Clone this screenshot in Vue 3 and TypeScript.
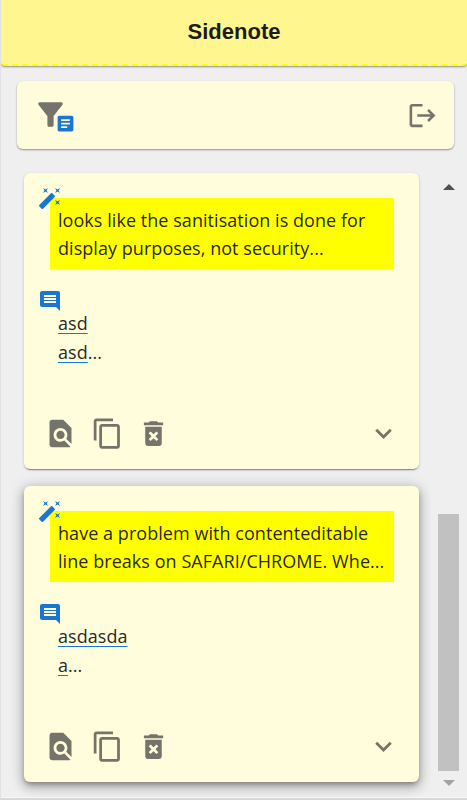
<script setup lang="ts">
interface Note {
  id: number;
  quote: string[];
  comment: string[];
  raised: boolean;
}

const notes: Note[] = [
  {
    id: 1,
    quote: ["looks like the sanitisation is done for", "display purposes, not security..."],
    comment: ["asd", "asd"],
    raised: false,
  },
  {
    id: 2,
    quote: ["have a problem with contenteditable", "line breaks on SAFARI/CHROME. Whe..."],
    comment: ["asdasda", "a"],
    raised: true,
  },
];
</script>

<template>
  <div class="page">
    <header class="header">Sidenote</header>

    <div class="toolbar">
      <div class="filter">
        <svg class="filter-icon" viewBox="0 0 24 24">
          <path d="M4.25 5.61C6.27 8.2 10 13 10 13v6c0 .55.45 1 1 1h2c.55 0 1-.45 1-1v-6s3.72-4.8 5.74-7.39c.51-.66.04-1.61-.79-1.61H5.04c-.83 0-1.3.95-.79 1.61z" />
        </svg>
        <svg class="filter-badge" viewBox="0 0 24 24">
          <path d="M19 3H5c-1.1 0-2 .9-2 2v14c0 1.1.9 2 2 2h14c1.1 0 2-.9 2-2V5c0-1.1-.9-2-2-2zm-5 14H7v-2h7v2zm3-4H7v-2h10v2zm0-4H7V7h10v2z" />
        </svg>
      </div>
      <svg class="logout" viewBox="0 0 24 24">
        <path d="M17 7l-1.41 1.41L18.17 11H8v2h10.17l-2.58 2.58L17 17l5-5zM4 5h8V3H4c-1.1 0-2 .9-2 2v14c0 1.1.9 2 2 2h8v-2H4V5z" />
      </svg>
    </div>

    <div class="body">
      <div class="list">
        <article v-for="note in notes" :key="note.id" class="card" :class="{ raised: note.raised }">
          <svg class="blue-icon wand" viewBox="0 0 24 24">
            <path d="M7.5 5.6L10 7 8.6 4.5 10 2 7.5 3.4 5 2l1.4 2.5L5 7zm12 9.8L17 14l1.4 2.5L17 19l2.5-1.4L22 19l-1.4-2.5L22 14zM22 2l-2.5 1.4L17 2l1.4 2.5L17 7l2.5-1.4L22 7l-1.4-2.5zm-7.63 5.29a.996.996 0 0 0-1.41 0L1.29 18.96a.996.996 0 0 0 0 1.41l2.34 2.34c.39.39 1.02.39 1.41 0L16.7 11.05a.996.996 0 0 0 0-1.41l-2.33-2.35z" />
          </svg>
          <div class="quote">
            <div v-for="line in note.quote" :key="line">{{ line }}</div>
          </div>

          <svg class="blue-icon chat" viewBox="0 0 24 24">
            <path d="M21.99 4c0-1.1-.89-2-1.99-2H4c-1.1 0-2 .9-2 2v12c0 1.1.9 2 2 2h14l4 4-.01-18zM18 14H6v-2h12v2zm0-3H6V9h12v2zm0-3H6V6h12v2z" />
          </svg>
          <div class="comment">
            <div><u>{{ note.comment[0] }}</u></div>
            <div><u>{{ note.comment[1] }}</u>...</div>
          </div>

          <footer class="actions">
            <svg viewBox="0 0 24 24">
              <path d="M20 19.59V8l-6-6H6c-1.1 0-1.99.9-1.99 2L4 20c0 1.1.89 2 1.99 2H18c.45 0 .85-.15 1.19-.4l-4.43-4.43c-.8.52-1.74.83-2.76.83-2.76 0-5-2.24-5-5s2.24-5 5-5 5 2.24 5 5c0 1.02-.31 1.96-.83 2.75L20 19.59zM9 13c0 1.66 1.34 3 3 3s3-1.34 3-3-1.34-3-3-3-3 1.34-3 3z" />
            </svg>
            <svg viewBox="0 0 24 24">
              <path d="M16 1H4c-1.1 0-2 .9-2 2v14h2V3h12V1zm3 4H8c-1.1 0-2 .9-2 2v14c0 1.1.9 2 2 2h11c1.1 0 2-.9 2-2V7c0-1.1-.9-2-2-2zm0 16H8V7h11v14z" />
            </svg>
            <svg viewBox="0 0 24 24">
              <path d="M6 19c0 1.1.9 2 2 2h8c1.1 0 2-.9 2-2V7H6v12zm2.46-7.12l1.41-1.41L12 12.59l2.12-2.12 1.41 1.41L13.41 14l2.12 2.12-1.41 1.41L12 15.41l-2.12 2.12-1.41-1.41L10.59 14l-2.13-2.12zM15.5 4l-1-1h-5l-1 1H5v2h14V4z" />
            </svg>
            <svg class="expand" viewBox="0 0 24 24">
              <path d="M16.59 8.59L12 13.17 7.41 8.59 6 10l6 6 6-6z" />
            </svg>
          </footer>
        </article>
      </div>

      <div class="scrollbar">
        <div class="arrow up"></div>
        <div class="thumb"></div>
        <div class="arrow down"></div>
      </div>
    </div>
  </div>
</template>

<style>
html,
body {
  margin: 0;
  background: #efefef;
}
</style>

<style scoped>
.page {
  height: 800px;
  box-sizing: border-box;
  overflow: hidden;
  display: flex;
  flex-direction: column;
  background: #efefef;
  border-left: 1px solid #e2e2e2;
  border-bottom: 2px solid #d8d8d8;
  font-family: "Open Sans", sans-serif;
  color: rgba(0, 0, 0, 0.87);
}

.header {
  height: 64px;
  flex: none;
  display: flex;
  align-items: center;
  justify-content: center;
  background: #fff68f;
  border-bottom: 2px dashed #ffff00;
  border-radius: 0 0 4px 4px;
  box-shadow: 0 1px 2px rgba(0, 0, 0, 0.4);
  font-family: "Liberation Sans", Arial, sans-serif;
  font-weight: 700;
  font-size: 22px;
  color: #1c1c1c;
}

.toolbar {
  flex: none;
  height: 68px;
  margin: 15px 13px 0 16px;
  padding: 0 16px 0 15px;
  display: flex;
  align-items: center;
  justify-content: space-between;
  background: #fffcdb;
  border-radius: 6px;
  box-shadow: 0 1px 2px rgba(0, 0, 0, 0.4);
}

.filter {
  position: relative;
  width: 37px;
  height: 37px;
  margin-bottom: 1px;
}

.filter-icon {
  width: 37px;
  height: 37px;
  display: block;
  fill: #75746a;
}

.filter-badge {
  position: absolute;
  left: 23px;
  top: 17px;
  width: 21px;
  height: 21px;
  fill: #1976d2;
}

.logout {
  width: 31px;
  height: 31px;
  fill: #75746a;
}

.body {
  flex: 1;
  min-height: 0;
  display: flex;
  border-bottom: 1px solid #f8f8f8;
}

.list {
  width: 395px;
  margin-left: 23px;
  padding-top: 24px;
  display: flex;
  flex-direction: column;
  gap: 17px;
}

.card {
  position: relative;
  flex: none;
  height: 296px;
  box-sizing: border-box;
  padding: 25px 25px 0 26px;
  background: #fffddc;
  border-radius: 6px;
  box-shadow: 0 2px 1px -1px rgba(0, 0, 0, 0.35), 0 1px 3px rgba(0, 0, 0, 0.2);
  font-size: 18px;
  letter-spacing: 0.05px;
  line-height: 28px;
}

.card.raised {
  box-shadow: 0 3px 5px -1px rgba(0, 0, 0, 0.3), 0 5px 12px 1px rgba(0, 0, 0, 0.2), 0 1px 14px 2px rgba(0, 0, 0, 0.12);
}

.blue-icon {
  position: absolute;
  left: 14px;
  width: 24px;
  height: 24px;
  fill: #1976d2;
}

.wand {
  top: 13px;
}

.chat {
  top: 116px;
}

.quote {
  padding: 8px 8px 7px;
  background: #ffff00;
}

.comment {
  margin: 40px 0 0 8px;
  line-height: 29px;
}

.comment u {
  text-decoration-color: #1976d2;
  text-underline-offset: 3px;
}

.actions {
  position: absolute;
  left: 20px;
  right: 19px;
  top: 244px;
  display: flex;
  gap: 13.5px;
}

.actions svg {
  width: 33px;
  height: 33px;
  fill: #75746a;
}

.actions .expand {
  margin-left: auto;
}

.scrollbar {
  width: 21px;
  margin-left: 19px;
  display: flex;
  flex-direction: column;
  align-items: center;
}

.arrow {
  width: 0;
  height: 0;
  border-left: 6px solid transparent;
  border-right: 6px solid transparent;
}

.arrow.up {
  margin-top: 35px;
  border-bottom: 6px solid #505050;
}

.thumb {
  width: 21px;
  height: 257px;
  margin-top: auto;
  background: #c1c1c1;
}

.arrow.down {
  margin-top: 9px;
  margin-bottom: 11px;
  border-top: 6px solid #a3a3a3;
}
</style>
